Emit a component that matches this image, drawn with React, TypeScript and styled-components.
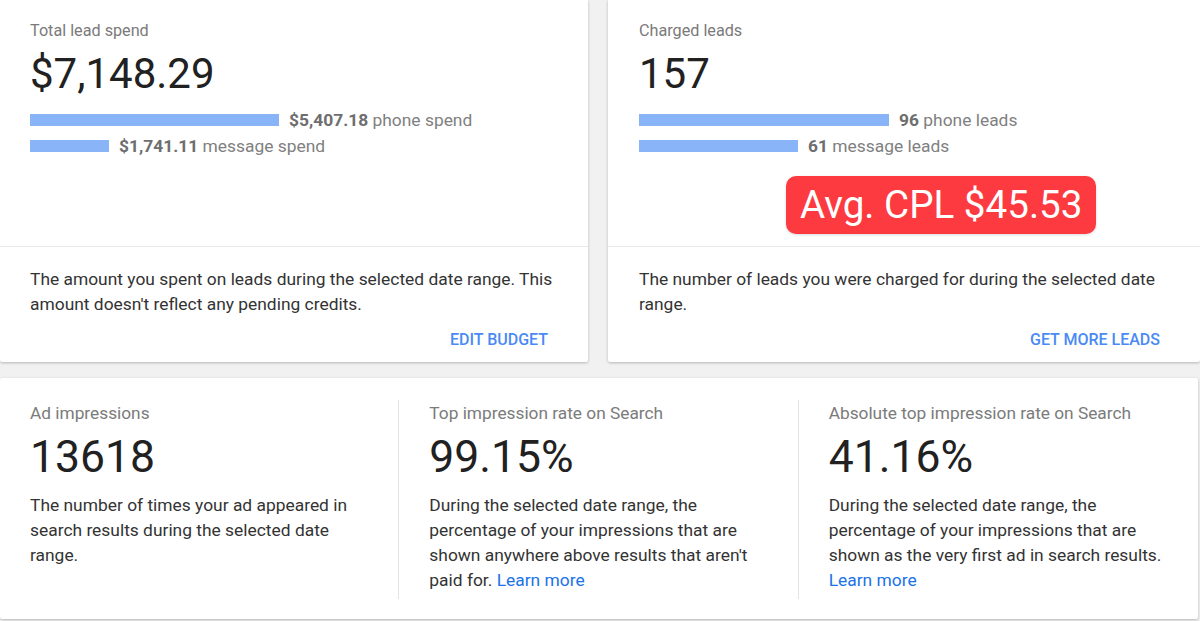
import React from 'react';
import styled, { createGlobalStyle } from 'styled-components';

const GlobalStyle = createGlobalStyle`
  html, body {
    margin: 0;
    padding: 0;
    background: #f1f1f1;
    font-family: Roboto, "Liberation Sans", Arial, sans-serif;
  }
  * {
    box-sizing: border-box;
  }
`;

const Page = styled.div`
  width: 1200px;
  height: 621px;
  overflow: hidden;
  background: #f1f1f1;
`;

const TopRow = styled.div`
  display: grid;
  grid-template-columns: 588px 592px;
  column-gap: 20px;
`;

const Card = styled.div`
  background: #fff;
  box-shadow: 0 1px 3px rgba(0, 0, 0, 0.25);
  border-radius: 0 0 2px 2px;
`;

const CardTop = styled.div<{ $indent: number }>`
  height: 247px;
  padding: 20px 0 0 ${(p) => p.$indent}px;
  border-bottom: 1px solid #e9e9e9;
`;

const Label = styled.div`
  font-size: 16.2px;
  line-height: 22px;
  color: #7a7a7a;
`;

const BigValue = styled.div`
  font-size: 42px;
  line-height: 48px;
  color: #212121;
  margin-top: 8px;
`;

const BarList = styled.div`
  display: flex;
  flex-direction: column;
  gap: 7px;
  margin-top: 12px;
`;

const BarRow = styled.div`
  display: flex;
  align-items: center;
  gap: 10px;
  height: 19px;
`;

const Bar = styled.div`
  height: 12px;
  background: #8ab4f8;
`;

const BarText = styled.span`
  font-size: 17.4px;
  color: #808080;

  b {
    font-weight: 700;
    color: #6e6e6e;
  }
`;

const Badge = styled.div`
  display: inline-block;
  margin: 21px 0 0 147px;
  padding: 0 14px;
  height: 58px;
  line-height: 58px;
  border-radius: 10px;
  background: #fc3a3f;
  color: #fff;
  font-size: 38.6px;
  box-shadow: 0 1px 3px rgba(0, 0, 0, 0.15);
`;

const CardBottom = styled.div<{ $indent: number }>`
  padding: 20px 30px 11px ${(p) => p.$indent}px;
`;

const Description = styled.p`
  margin: 0;
  font-size: 17.4px;
  line-height: 25px;
  color: #333;
`;

const Actions = styled.div`
  display: flex;
  justify-content: flex-end;
  margin-top: 12px;
  padding-right: 10px;
`;

const ActionLink = styled.a`
  font-size: 16px;
  font-weight: 500;
  color: #4a8af4;
  text-transform: uppercase;
  text-decoration: none;
  line-height: 22px;
`;

const BottomCard = styled(Card)`
  width: 1198px;
  margin-top: 16px;
  height: 241px;
  border-radius: 2px;
  display: grid;
  grid-template-columns: repeat(3, 1fr);
  padding: 22px 0 20px;
`;

const Metric = styled.div<{ $first?: boolean }>`
  padding: 0 30px;
  border-left: ${(p) => (p.$first ? 'none' : '1px solid #e3e3e3')};
  margin-left: ${(p) => (p.$first ? '0' : '-1px')};
`;

const MetricLabel = styled.div`
  font-size: 17.3px;
  line-height: 26px;
  color: #7b7b7b;
`;

const MetricValue = styled.div`
  font-size: 44.5px;
  line-height: 52px;
  color: #212121;
  margin: 5px 0 10px;
`;

const LearnMore = styled.a`
  color: #1a73e8;
  text-decoration: none;
`;

type BarItem = { width: number; value: string; unit: string };

const Bars = ({ items }: { items: BarItem[] }) => (
  <BarList>
    {items.map((item) => (
      <BarRow key={item.unit}>
        <Bar style={{ width: item.width }} />
        <BarText>
          <b>{item.value}</b> {item.unit}
        </BarText>
      </BarRow>
    ))}
  </BarList>
);

export default function App() {
  return (
    <Page>
      <GlobalStyle />
      <TopRow>
        <Card>
          <CardTop $indent={30}>
            <Label>Total lead spend</Label>
            <BigValue>$7,148.29</BigValue>
            <Bars
              items={[
                { width: 249, value: '$5,407.18', unit: 'phone spend' },
                { width: 79, value: '$1,741.11', unit: 'message spend' },
              ]}
            />
          </CardTop>
          <CardBottom $indent={30}>
            <Description>
              The amount you spent on leads during the selected date range. This amount doesn't
              reflect any pending credits.
            </Description>
            <Actions>
              <ActionLink href="#">Edit budget</ActionLink>
            </Actions>
          </CardBottom>
        </Card>
        <Card>
          <CardTop $indent={31}>
            <Label>Charged leads</Label>
            <BigValue>157</BigValue>
            <Bars
              items={[
                { width: 250, value: '96', unit: 'phone leads' },
                { width: 159, value: '61', unit: 'message leads' },
              ]}
            />
            <Badge>Avg. CPL $45.53</Badge>
          </CardTop>
          <CardBottom $indent={31}>
            <Description>
              The number of leads you were charged for during the selected date range.
            </Description>
            <Actions>
              <ActionLink href="#">Get more leads</ActionLink>
            </Actions>
          </CardBottom>
        </Card>
      </TopRow>
      <BottomCard>
        <Metric $first>
          <MetricLabel>Ad impressions</MetricLabel>
          <MetricValue>13618</MetricValue>
          <Description>
            The number of times your ad appeared in search results during the selected date range.
          </Description>
        </Metric>
        <Metric>
          <MetricLabel>Top impression rate on Search</MetricLabel>
          <MetricValue>99.15%</MetricValue>
          <Description>
            During the selected date range, the percentage of your impressions that are shown
            anywhere above results that aren't paid for. <LearnMore href="#">Learn more</LearnMore>
          </Description>
        </Metric>
        <Metric>
          <MetricLabel>Absolute top impression rate on Search</MetricLabel>
          <MetricValue>41.16%</MetricValue>
          <Description>
            During the selected date range, the percentage of your impressions that are shown as
            the very first ad in search results. <LearnMore href="#">Learn more</LearnMore>
          </Description>
        </Metric>
      </BottomCard>
    </Page>
  );
}
